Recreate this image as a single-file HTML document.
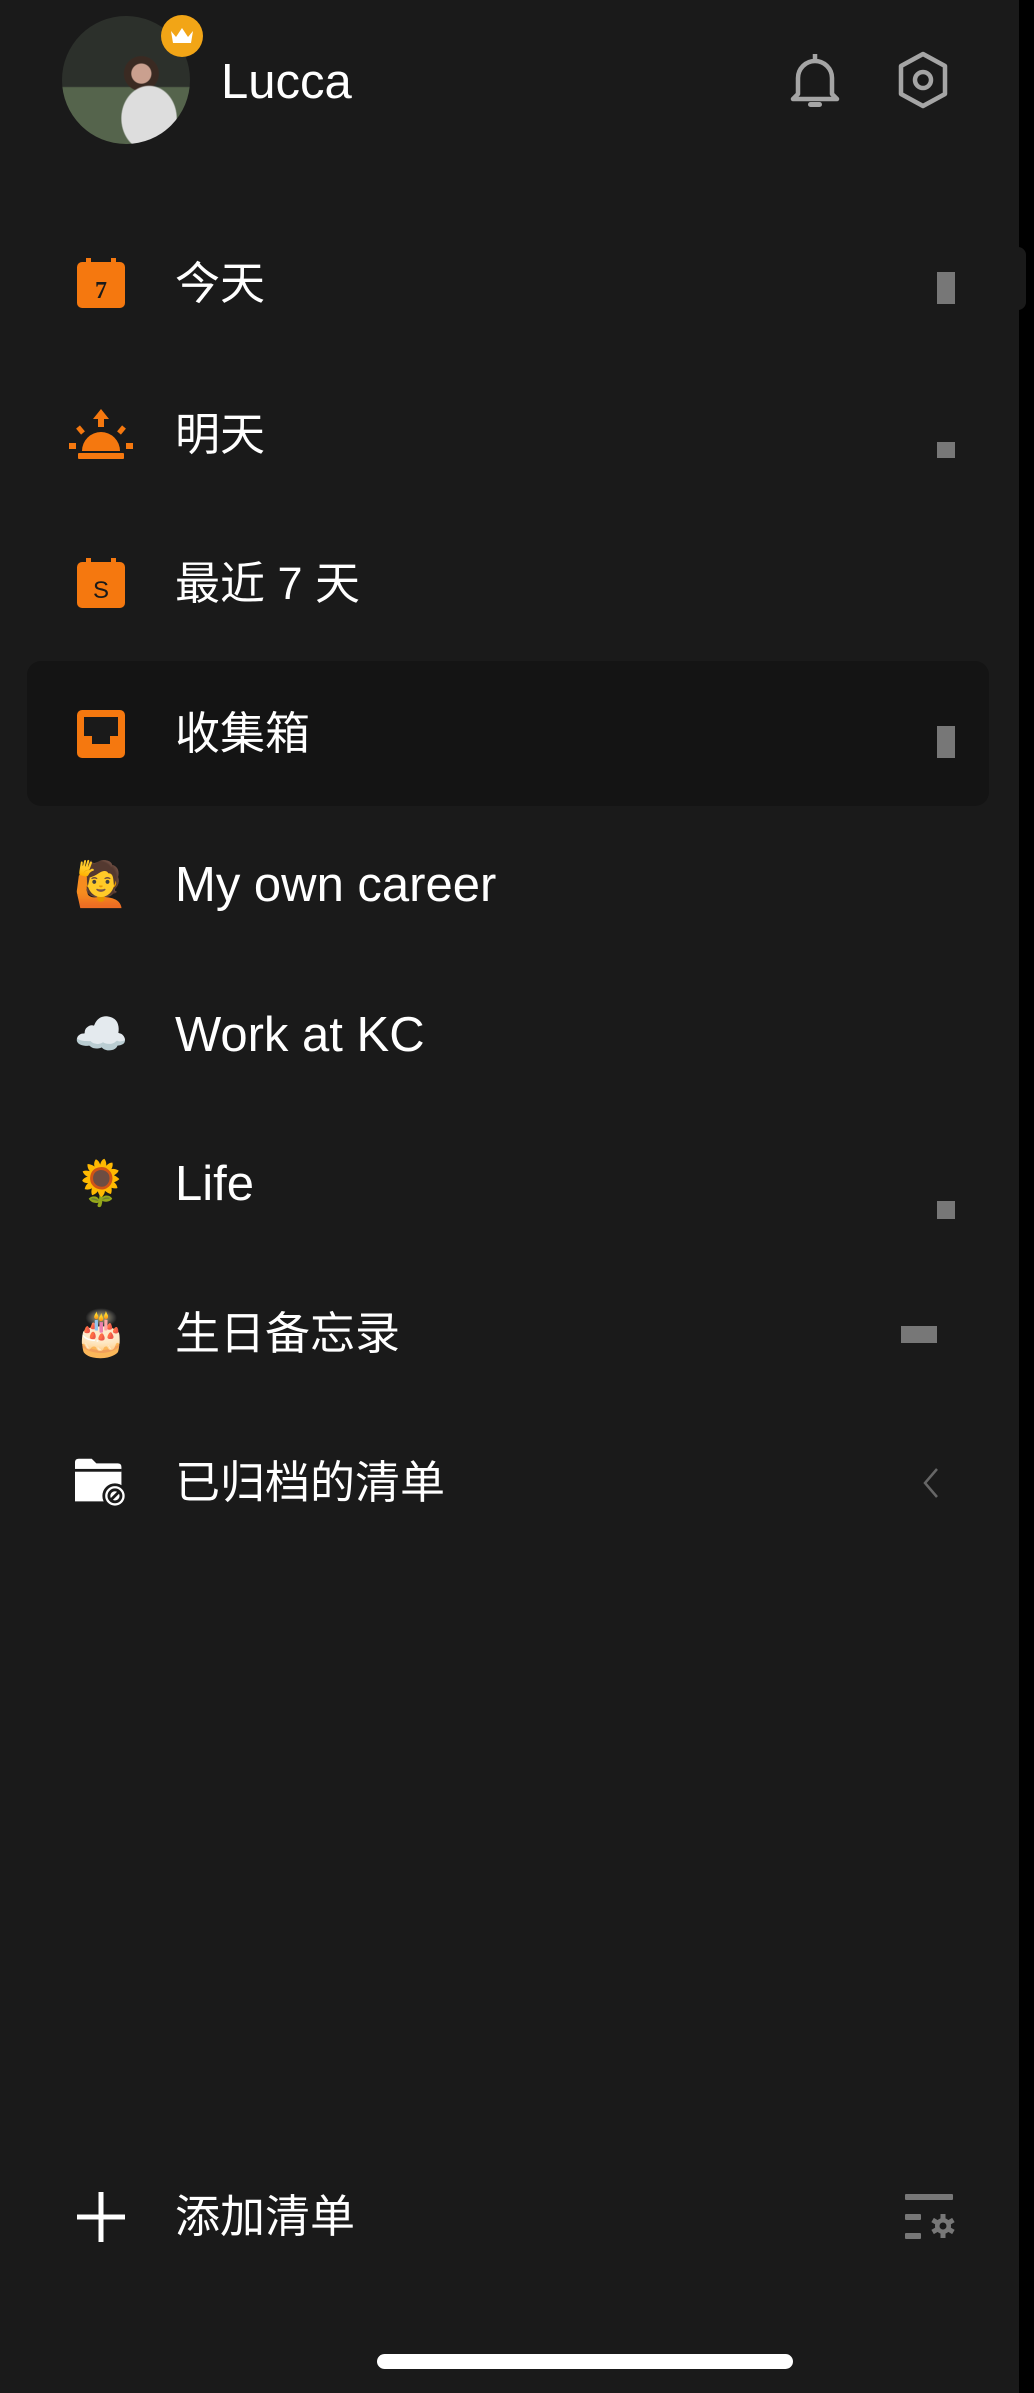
<!DOCTYPE html>
<html><head><meta charset="utf-8"><style>
*{margin:0;padding:0;box-sizing:border-box}
body{width:1034px;height:2393px;background:#1a1a1a;position:relative;overflow:hidden;font-family:"Liberation Sans","Noto Sans CJK SC",sans-serif;color:#fff}
.strip{position:absolute;left:1019px;top:0;width:15px;height:2393px;background:#000}
.bump{position:absolute;left:1012px;top:247px;width:14px;height:63px;background:#1a1a1a;border-radius:0 8px 8px 0}
.abs{position:absolute}
.row{position:absolute;left:0;width:1000px;height:100px}
.icon{position:absolute;left:75px;width:52px;height:52px;display:flex;align-items:center;justify-content:center;font-size:44px;line-height:1}
.txt{position:absolute;left:175px;font-size:45px;line-height:60px;white-space:nowrap}
.lat{font-size:49px}
.ind{position:absolute;background:#777}
</style></head><body>
<div class="strip"></div><div class="bump"></div>
<div class="abs" style="left:27px;top:661px;width:962px;height:145px;background:#141414;border-radius:14px"></div>

<div class="abs" style="left:62px;top:16px;width:128px;height:128px;border-radius:50%;overflow:hidden;background:radial-gradient(ellipse at 68% 80%,#ddd 0 22%,transparent 23%),radial-gradient(circle at 62% 45%,#caa08f 0 9%,#3a2a22 10% 16%,transparent 17%),linear-gradient(#2c302b 0 55%,#55644c 56%)"></div>
<div class="abs" style="left:161px;top:15px;width:42px;height:42px;border-radius:50%;background:#f2a516;display:flex;align-items:center;justify-content:center">
<svg width="26" height="22" viewBox="0 0 26 22"><path d="M2 6 L7 12 L13 3 L19 12 L24 6 L22 18 L4 18Z" fill="#fff"/></svg></div>
<div class="txt lat" style="left:221px;top:52px">Lucca</div>

<svg class="abs" style="left:786px;top:50px" width="58" height="60" viewBox="0 0 58 60"><path d="M29 4v5M12 44V28a17 17 0 0 1 34 0v16l5 5H7z" fill="none" stroke="#a5a5a5" stroke-width="4.5" stroke-linejoin="round"/><rect x="22" y="52" width="14" height="5" rx="2.5" fill="#a5a5a5"/></svg>
<svg class="abs" style="left:895px;top:50px" width="56" height="60" viewBox="0 0 56 60"><path d="M28 4 L50 16 V44 L28 56 L6 44 V16Z" fill="none" stroke="#a5a5a5" stroke-width="4.5" stroke-linejoin="round"/><circle cx="28" cy="30" r="8" fill="none" stroke="#a5a5a5" stroke-width="4.5"/></svg>

<div class="row" style="top:234px">
<svg class="icon" style="top:24px" viewBox="0 0 52 52"><rect x="2" y="4" width="48" height="46" rx="5" fill="#f5780f"/><rect x="11" y="0" width="5" height="8" fill="#f5780f"/><rect x="36" y="0" width="5" height="8" fill="#f5780f"/><text x="26" y="40" font-size="24" font-weight="bold" fill="#1a1a1a" text-anchor="middle" font-family="Liberation Serif">7</text></svg>
<div class="txt" style="top:20px">今天</div>
<div class="ind" style="left:937px;top:38px;width:18px;height:32px"></div></div>

<div class="row" style="top:385px">
<svg class="icon" style="top:24px;left:68px;width:66px" viewBox="0 0 66 52"><path d="M33 0 L25 10 H30 V18 H36 V10 H41Z" fill="#f5780f"/><path d="M14 42 A19 19 0 0 1 52 42Z" fill="#f5780f"/><rect x="10" y="44" width="46" height="6" rx="1" fill="#f5780f"/><rect x="1" y="34" width="7" height="6" fill="#f5780f"/><rect x="58" y="34" width="7" height="6" fill="#f5780f"/><path d="M10 18 l5 6 M56 18 l-5 6" stroke="#f5780f" stroke-width="5"/></svg>
<div class="txt" style="top:20px">明天</div>
<div class="ind" style="left:937px;top:57px;width:18px;height:16px"></div></div>

<div class="row" style="top:534px">
<svg class="icon" style="top:24px" viewBox="0 0 52 52"><rect x="2" y="4" width="48" height="46" rx="5" fill="#f5780f"/><rect x="11" y="0" width="5" height="8" fill="#f5780f"/><rect x="36" y="0" width="5" height="8" fill="#f5780f"/><text x="26" y="40" font-size="24" fill="#1a1a1a" text-anchor="middle">S</text></svg>
<div class="txt" style="top:20px">最近 7 天</div></div>

<div class="row" style="top:684px">
<svg class="icon" style="top:24px" viewBox="0 0 52 52"><rect x="2" y="2" width="48" height="48" rx="5" fill="#f5780f"/><path d="M9 9 H43 V28 H35 V36 H17 V28 H9Z" fill="#1a1a1a"/></svg>
<div class="txt" style="top:20px">收集箱</div>
<div class="ind" style="left:937px;top:42px;width:18px;height:32px"></div></div>

<div class="row" style="top:835px"><div class="icon" style="top:24px">🙋</div><div class="txt lat" style="top:20px">My own career</div></div>
<div class="row" style="top:985px"><div class="icon" style="top:24px">☁️</div><div class="txt lat" style="top:20px">Work at KC</div></div>
<div class="row" style="top:1134px"><div class="icon" style="top:24px">🌻</div><div class="txt lat" style="top:20px">Life</div>
<div class="ind" style="left:937px;top:67px;width:18px;height:18px"></div></div>
<div class="row" style="top:1284px"><div class="icon" style="top:24px">🎂</div><div class="txt" style="top:20px">生日备忘录</div>
<div class="ind" style="left:901px;top:42px;width:36px;height:17px"></div></div>

<div class="row" style="top:1433px">
<svg class="icon" style="top:22px;width:60px;left:71px" viewBox="0 0 60 56"><path d="M2 8 Q2 4 6 4 H20 L25 9 H48 Q52 9 52 13 V50 H2Z" fill="#fff"/><rect x="2" y="15" width="50" height="3" fill="#1a1a1a"/><circle cx="45" cy="44" r="12" fill="#fff" stroke="#1a1a1a" stroke-width="3"/><circle cx="45" cy="44" r="6.5" fill="none" stroke="#1a1a1a" stroke-width="3"/><path d="M40 49 L50 39" stroke="#1a1a1a" stroke-width="3"/></svg>
<div class="txt" style="top:20px">已归档的清单</div>
<svg class="abs" style="left:922px;top:34px" width="18" height="32" viewBox="0 0 18 32"><path d="M15 2 L3 16 L15 30" fill="none" stroke="#666" stroke-width="2.5"/></svg></div>

<svg class="abs" style="left:77px;top:2192px" width="48" height="50" viewBox="0 0 48 50"><path d="M24 0V50M0 25H48" stroke="#fff" stroke-width="5"/></svg>
<div class="txt" style="top:2187px">添加清单</div>
<svg class="abs" style="left:905px;top:2194px" width="54" height="46" viewBox="0 0 54 46"><rect x="0" y="0" width="48" height="6" rx="1" fill="#777"/><rect x="0" y="20" width="16" height="6" rx="1" fill="#777"/><rect x="0" y="39" width="16" height="6" rx="1" fill="#777"/><path d="M38 20v24M27.6 26l20.8 12M27.6 38l20.8-12" stroke="#777" stroke-width="5"/><circle cx="38" cy="32" r="8" fill="#777"/><circle cx="38" cy="32" r="3.5" fill="#1a1a1a"/></svg>
<div class="abs" style="left:377px;top:2354px;width:416px;height:15px;border-radius:8px;background:#fff"></div>
</body></html>
